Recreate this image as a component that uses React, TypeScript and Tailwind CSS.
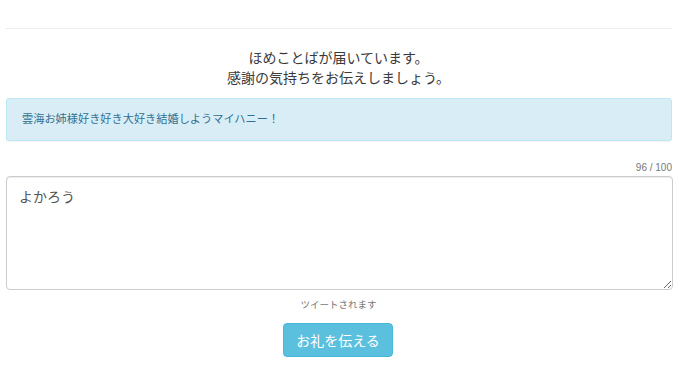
import React from 'react'

const font = { fontFamily: '"Noto Sans CJK JP", "Noto Sans", sans-serif' }

const App: React.FC = () => {
  return (
    <div
      className="w-[680px] h-[383px] bg-white pl-[5px] pr-[8px] text-[#3a3a3a] overflow-hidden"
      style={font}
    >
      <hr className="mt-[28px] border-0 border-t border-[#eee]" />
      <div className="mt-[18px] text-center text-[14px] leading-[20px]">
        <p>ほめことばが届いています。</p>
        <p>感謝の気持ちをお伝えしましょう。</p>
      </div>
      <div className="mt-[11px] ml-px h-[43px] pt-[10px] pb-[14px] px-[15px] rounded-[3px] bg-[#d9edf7] border border-[#bce8f1] text-[#31708f] text-[11.2px] leading-[19px] shadow-[0_1px_1px_rgba(0,0,0,0.05)]">
        雲海お姉様好き好き大好き結婚しようマイハニー！
      </div>
      <div
        className="mt-[22px] text-right text-[10px] leading-[10px] text-[#777]"
        style={{ fontFamily: '"Liberation Sans", Arial, sans-serif' }}
      >
        96 / 100
      </div>
      <textarea
        className="mt-[3px] ml-px block w-[667px] h-[114px] px-[12px] pt-[9px] text-[14px] leading-[20px] text-[#555] border border-[#ccc] rounded-[4px] shadow-[inset_0_1px_1px_rgba(0,0,0,0.075)] outline-none resize-y"
        style={font}
        defaultValue="よかろう"
      />
      <p className="mt-[8px] text-center text-[9.5px] leading-[13px] text-[#777]">ツイートされます</p>
      <div className="mt-[12px] flex justify-center">
        <button className="w-[110px] h-[34px] ml-[-1px] rounded-[4px] bg-[#5bc0de] border border-[#46b8da] text-white text-[14px] leading-[20px]">
          お礼を伝える
        </button>
      </div>
    </div>
  )
}

export default App
